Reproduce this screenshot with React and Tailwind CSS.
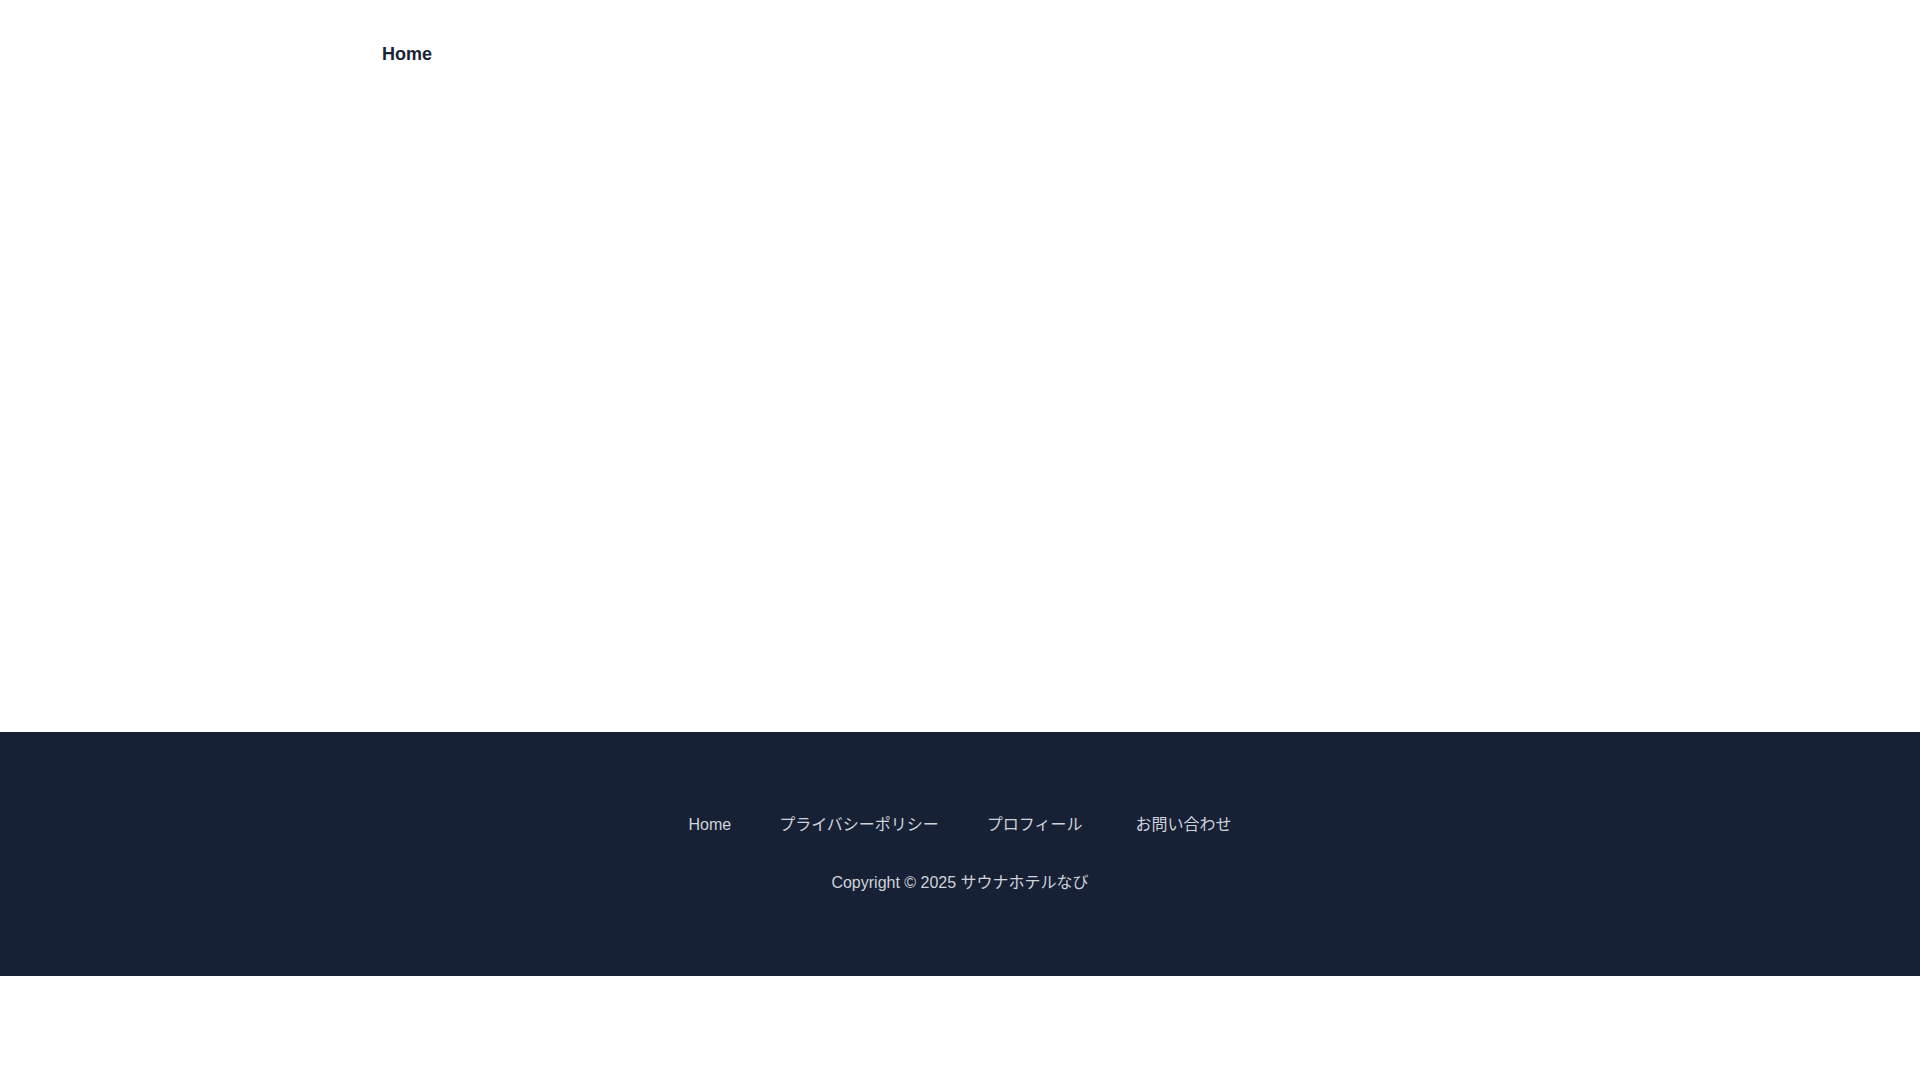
export default function App() {
  return (
    <div className="w-full bg-white font-['Liberation_Sans','Noto_Sans_CJK_JP',sans-serif]">
      <div className="h-[732px] flex flex-col">
        <header className="w-full max-w-[1280px] mx-auto pl-[62px] pt-10">
          <a href="#" className="text-[18px] leading-7 font-bold text-[#1a2234]">Home</a>
        </header>
        <main className="flex-1" />
      </div>
      <footer className="bg-[#172136] h-[244px] pt-[81px] flex flex-col items-center gap-[34px]">
        <nav className="flex items-center gap-12 text-[16px] leading-6 text-[#cfd3da]">
          <a href="#">Home</a>
          <a href="#">プライバシーポリシー</a>
          <a href="#">プロフィール</a>
          <a href="#" className="ml-[5px]">お問い合わせ</a>
        </nav>
        <p className="text-[16px] leading-6 text-[#cfd3da]">Copyright © 2025 サウナホテルなび</p>
      </footer>
      <div className="h-[104px] bg-white" />
    </div>
  );
}
